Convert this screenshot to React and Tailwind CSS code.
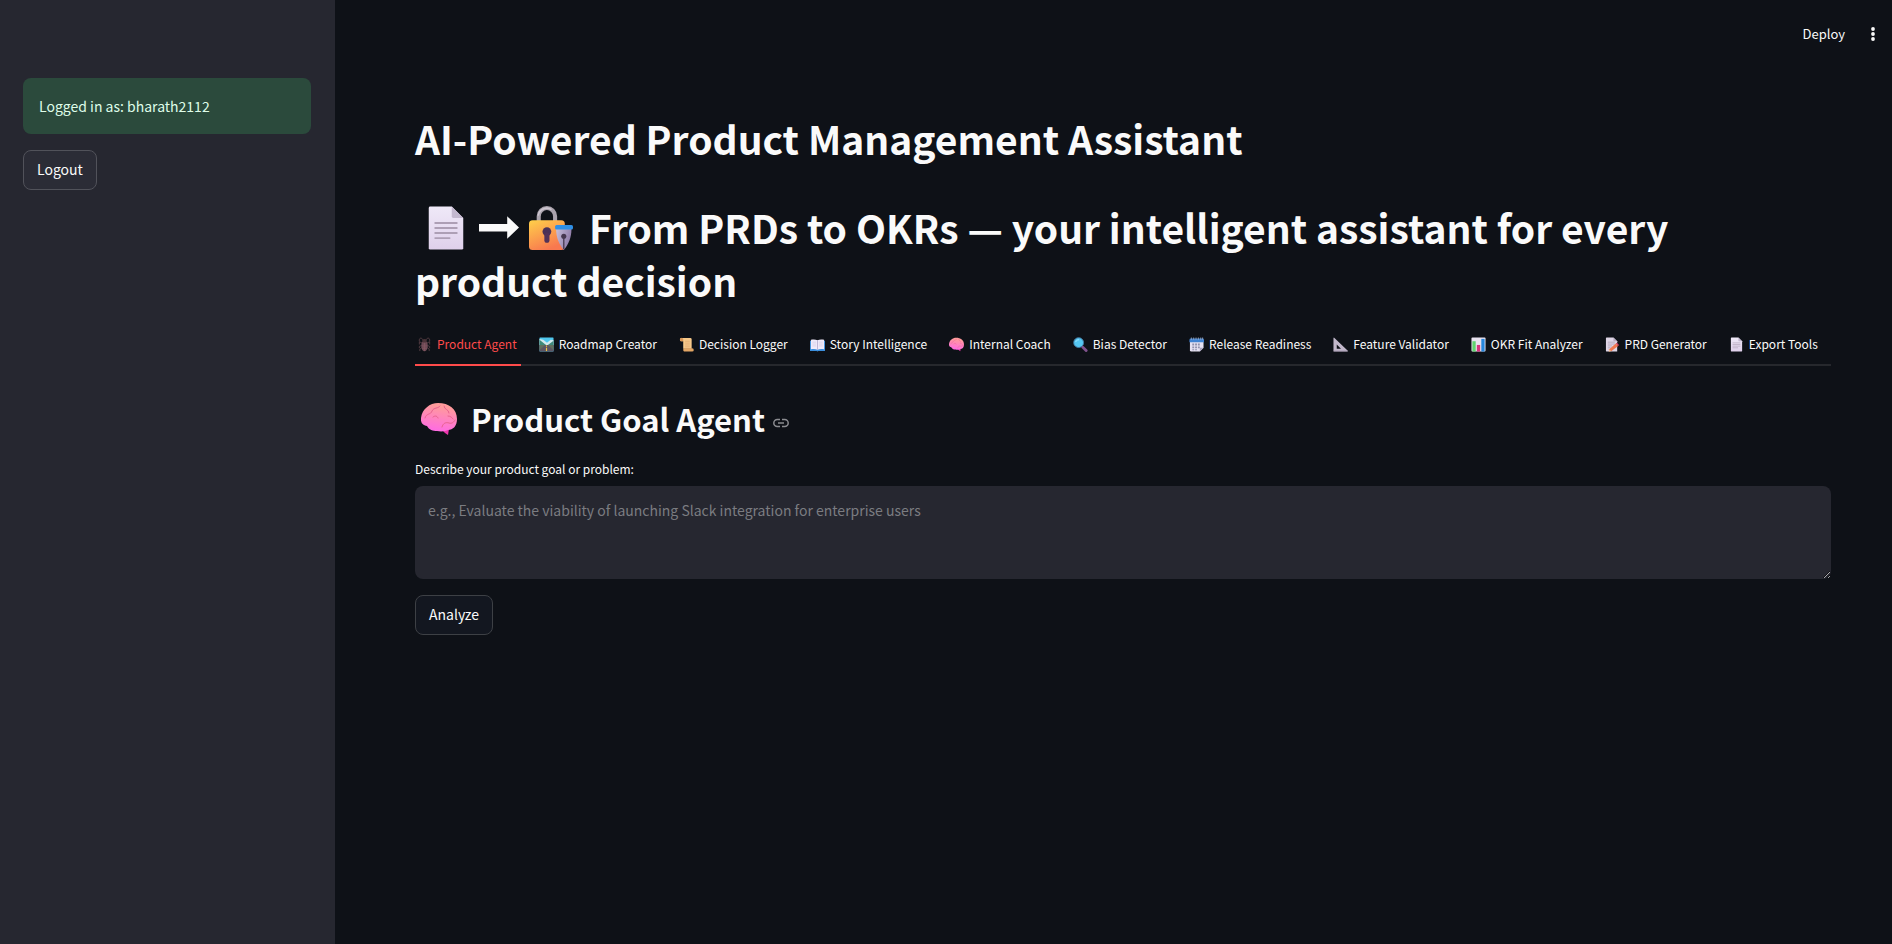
import React from "react";

function Svg({ className = "size-[15px]", children }) {
  return (
    <svg viewBox="0 0 32 32" className={`${className} shrink-0`} aria-hidden="true">
      {children}
    </svg>
  );
}

function Grad({ id, from, to, x2 = 0, y2 = 1 }) {
  return (
    <linearGradient id={id} x1="0" y1="0" x2={x2} y2={y2}>
      <stop offset="0" stopColor={from} />
      <stop offset="1" stopColor={to} />
    </linearGradient>
  );
}

function PageIcon({ className }) {
  return (
    <Svg className={className}>
      <defs><Grad id="page" from="#efe9f8" to="#dfd0eb" /></defs>
      <path d="M5 1h15l8 8v21a1 1 0 0 1-1 1H5a1 1 0 0 1-1-1V2a1 1 0 0 1 1-1z" fill="url(#page)" />
      <path d="M20 1l8 8h-7a1 1 0 0 1-1-1z" fill="#c3b8cf" />
      <path d="M8.500 12.500h15M8.500 16h15M8.500 19.500h15M8.500 23h10" stroke="#ad9fb5" strokeWidth="1.300" strokeLinecap="round" />
    </Svg>
  );
}

function ArrowIcon({ className }) {
  return (
    <svg viewBox="0 0 39 23" className={`${className} shrink-0`} aria-hidden="true">
      <path d="M0 7.500h27.500V0L39 11 27.500 22v-7H0z" fill="#fafafa" />
    </svg>
  );
}

function LockPenIcon({ className }) {
  return (
    <svg viewBox="0 0 43 43" className={`${className} shrink-0`} aria-hidden="true">
      <defs>
        <Grad id="lock" from="#ffd04a" to="#f8784f" x2={0.5} />
        <Grad id="nib" from="#c8bfd9" to="#8e7ba8" x2={1} y2={0.4} />
      </defs>
      <path d="M9.500 17V10a8 8 0 0 1 16 0v7" fill="none" stroke="#aaa3ad" strokeWidth="4" />
      <path d="M9 9.500a8.500 8.500 0 0 1 13-6" fill="none" stroke="#ccc5cf" strokeWidth="1.500" />
      <rect x="0" y="14" width="35" height="29" rx="3.500" fill="url(#lock)" />
      <circle cx="17.500" cy="25" r="4.300" fill="#4b3157" />
      <rect x="15" y="26" width="5" height="10" rx="2.500" fill="#533258" />
      <path d="M26.500 22.500h15c0 8-2.500 14.500-7.500 20.500-5-6-7.500-12.500-7.500-20.500z" fill="url(#nib)" />
      <rect x="25.500" y="18.500" width="17.500" height="4.500" rx="1.500" fill="#2f8fe5" />
      <circle cx="34" cy="29.500" r="2.500" fill="#46384f" />
      <path d="M34 30v12" stroke="#46384f" strokeWidth="1.300" />
    </svg>
  );
}

function BrainIcon({ className }) {
  return (
    <svg viewBox="0 0 36 32" className={`${className} shrink-0`} aria-hidden="true">
      <defs><Grad id="brain" from="#ff9b9b" to="#ff64ee" x2={-0.2} /></defs>
      <path d="M21 24l7 2-1 6c-2-1-4-3-6-5z" fill="#ed36ad" />
      <path d="M17 0C9 0 1 6 0 15c-.6 6 3 7 6 8 2 4 6 5 10 5 5 1 9 0 11-1 5 0 9-4 9-11C36 6 28 0 17 0z" fill="url(#brain)" />
      <path d="M4 15c1-5 6-3 7-7 2-4 6-2 8-5M17 15c-1-3-4-2-5-1M21 24c1-4 4-5 7-4 3 1 5-1 6-3M27 13c3 0 4 2 5 3M23 3c0 4 5 3 5 7" fill="none" stroke="#e8638f" strokeWidth="1" strokeLinecap="round" />
    </svg>
  );
}

function BugIcon() {
  return (
    <Svg>
      <g fill="none" stroke="#5c4248" strokeWidth="1.800">
        <path d="M13 6C9 0 4 2 5 9M19 6c4-6 9-4 8 3M11 13L5 10v6M21 13l6-3v6M10 18l-5 2v4M22 18l5 2v4M10 23l-4 3v4M22 23l4 3v4" />
      </g>
      <ellipse cx="16" cy="19" rx="7" ry="11.500" fill="#6d4a55" />
      <ellipse cx="16" cy="8" rx="5" ry="4" fill="#493338" />
      <path d="M16 12v18M11 19h10M11 24h10" stroke="#8a5b66" strokeWidth="1.300" />
    </Svg>
  );
}

function RoadIcon() {
  return (
    <Svg>
      <rect x="1" y="1" width="30" height="30" rx="1" fill="#4fc7ee" />
      <path d="M1 4l8 2 8 6 8-6 6 1v10H1z" fill="#d3e9ee" />
      <path d="M1 6l14 11H1zM31 8L19 17h12z" fill="#3f8a7b" />
      <path d="M1 17h30v14H1z" fill="#5c5563" />
      <path d="M1 17h12L1 28zM31 17H19l12 11z" fill="#62705d" />
      <path d="M16 18v3M16 23v7" stroke="#f4c542" strokeWidth="2.400" />
    </Svg>
  );
}

function ScrollIcon() {
  return (
    <Svg>
      <path d="M5 2h19a3 3 0 0 1 3 3v20H9V9H4a3 3 0 0 1-2-3c0-3 1-4 3-4z" fill="#f7c98a" />
      <path d="M5 2a3 3 0 0 1 4 3v4H4C1 8 1 3 5 2z" fill="#d99555" />
      <path d="M12 24h16a3 3 0 0 1 0 7H12c-4 0-4-7 0-7z" fill="#e3a665" />
      <path d="M13 9h10M13 13h10M13 17h10M13 21h10" stroke="#dba069" strokeWidth="1.300" />
    </Svg>
  );
}

function BookIcon() {
  return (
    <Svg>
      <path d="M0 8h32v22H18l-2 1-2-1H0z" fill="#3b8edc" />
      <path d="M2 6c5-1 10-1 14 1 4-2 9-2 14-1v20c-5-1-10-1-14 1-4-2-9-2-14-1z" fill="#efeafa" />
      <path d="M16 7v20" stroke="#aaa0c6" strokeWidth="1.500" />
      <path d="M5 11h8M5 15h8M5 19h8M19 11h8M19 15h8M19 19h8" stroke="#c9c0dd" strokeWidth="1.100" />
    </Svg>
  );
}

function LensIcon() {
  return (
    <Svg>
      <path d="M19 20l9 9" stroke="#80528d" strokeWidth="6" strokeLinecap="round" />
      <circle cx="12" cy="12" r="10.500" fill="#55c7f2" stroke="#427ba4" strokeWidth="2" />
      <path d="M6 10c1-3 3-4 6-4" fill="none" stroke="#a4e7ff" strokeWidth="2" strokeLinecap="round" />
    </Svg>
  );
}

function CalendarIcon() {
  return (
    <Svg>
      <path d="M2 7h29v16l-8 8H5a3 3 0 0 1-3-3z" fill="#e5e1f2" />
      <path d="M23 31v-8h8z" fill="#a9a3bd" />
      <path d="M1 11V6a3 3 0 0 1 3-3h25a3 3 0 0 1 3 3v5z" fill="#3f83d3" />
      <path d="M5 1v5M10 1v5M15 1v5M20 1v5M25 1v5M29 1v5" stroke="#a7b2c9" strokeWidth="1.600" />
      <g fill="#8f91ae">
        <path d="M7 14h4v4H7zM13 14h4v4h-4zM19 14h4v4h-4zM7 20h4v4H7zM13 20h4v4h-4zM19 20h4v4h-4zM7 26h4v2H7zM13 26h4v2h-4z" />
      </g>
    </Svg>
  );
}

function RulerIcon() {
  return (
    <Svg>
      <path d="M2 1l29 28a1 1 0 0 1-1 2H2a1 1 0 0 1-1-1V2zM8 16v9h9z" fill="#c2b8cb" fillRule="evenodd" />
      <path d="M1 30h30" stroke="#978ba1" strokeWidth="1.500" />
    </Svg>
  );
}

function ChartIcon() {
  return (
    <Svg>
      <rect x="1" y="1" width="30" height="30" rx="2" fill="#e8e2ef" />
      <rect x="3" y="9" width="7" height="22" fill="#5fd36e" />
      <rect x="12.500" y="17" width="7" height="14" fill="#d7357c" />
      <rect x="22" y="4" width="7" height="27" fill="#2687dc" />
    </Svg>
  );
}

function MemoIcon() {
  return (
    <Svg>
      <path d="M3 1h15l8 8v22H3a1 1 0 0 1-1-1V2z" fill="#ded5e6" />
      <path d="M18 1l8 8h-8z" fill="#b9acc4" />
      <path d="M6 11h15M6 15h15M6 19h9M6 23h6" stroke="#a99cb1" strokeWidth="1.500" />
      <path d="M9 26L23 14l5 5-14 11-6 1z" fill="#ef7850" />
      <path d="M23 14l2-2 5 5-2 2z" fill="#da4265" />
      <path d="M8 31l1-5 4 4z" fill="#edc49a" />
    </Svg>
  );
}

function LinkIcon() {
  return (
    <svg viewBox="0 0 16 16" className="size-4" aria-hidden="true">
      <path d="M7 4.500H4.300a3.500 3.500 0 0 0 0 7H7M9 4.500h2.700a3.500 3.500 0 0 1 0 7H9M5 8h6" fill="none" stroke="#8b8c90" strokeWidth="1.500" />
    </svg>
  );
}

const tabs = [
  ["Product Agent", <BugIcon />],
  ["Roadmap Creator", <RoadIcon />],
  ["Decision Logger", <ScrollIcon />],
  ["Story Intelligence", <BookIcon />],
  ["Internal Coach", <BrainIcon className="size-[15px]" />],
  ["Bias Detector", <LensIcon />],
  ["Release Readiness", <CalendarIcon />],
  ["Feature Validator", <RulerIcon />],
  ["OKR Fit Analyzer", <ChartIcon />],
  ["PRD Generator", <MemoIcon />],
  ["Export Tools", <PageIcon className="size-[15px]" />],
];

export default function App() {
  return (
    <div className="flex min-h-screen bg-[#0e1117] font-['Noto_Sans_CJK_SC',sans-serif] text-[14px] text-[#fafafa] scheme-dark">
      <aside className="w-[335px] shrink-0 bg-[#262730] pt-[78px] pr-6 pl-[23px]">
        <div role="status" className="flex h-14 items-center rounded-lg bg-[#2b4a3c] px-4 text-[#dffde9]">
          Logged in as: bharath2112
        </div>
        <button type="button" className="mt-4 h-10 rounded-lg border border-[#51525a] bg-[#2b2c36] px-[13px] pb-0.5">
          Logout
        </button>
      </aside>

      <div className="min-w-0 flex-1">
        <header className="flex h-[68px] items-center justify-end gap-5 pr-[11px] text-[13px]">
          <button type="button">Deploy</button>
          <button type="button" aria-label="Main menu" className="flex size-4 items-center justify-center">
            <svg viewBox="0 0 16 16" className="size-4" fill="#fafafa" aria-hidden="true">
              <circle cx="8" cy="3" r="1.900" />
              <circle cx="8" cy="8" r="1.900" />
              <circle cx="8" cy="13" r="1.900" />
            </svg>
          </button>
        </header>

        <main className="pt-11 pr-[61px] pl-20">
          <h1 className="text-[39px] leading-[53px] font-bold">AI-Powered Product Management Assistant</h1>
          <h1 className="mt-9 pr-6 text-[39px] leading-[53px] font-bold">
            <span className="mr-4 ml-2 inline-flex items-center gap-[10px] align-[-7px] leading-none">
              <PageIcon className="size-[46px]" />
              <ArrowIcon className="h-6 w-10" />
              <LockPenIcon className="size-11" />
            </span>
            From PRDs to OKRs — your intelligent assistant for every product decision
          </h1>

          <div role="tablist" className="mt-[19px] flex h-10 gap-4 border-b-2 border-[#26282d] text-[12px]">
            {tabs.map(([label, icon], i) => (
              <button
                key={label}
                type="button"
                role="tab"
                aria-selected={i === 0}
                className={`-mb-0.5 flex items-center gap-[5px] border-b-2 pr-1 pb-0.5 pl-0.5 whitespace-nowrap ${
                  i === 0 ? "border-[#ff4b4b] text-[#ff4b4b]" : "border-transparent"
                }`}
              >
                {icon}
                {label}
              </button>
            ))}
          </div>

          <h2 className="mt-[31px] flex h-11 items-center text-[31px] leading-[44px] font-bold">
            <BrainIcon className="mr-[14px] ml-1.5 h-8 w-9" />
            Product Goal Agent
            <a href="#product-goal-agent" aria-label="Link to heading" className="mt-2 ml-2">
              <LinkIcon />
            </a>
          </h2>

          <label htmlFor="goal" className="mt-[18px] block text-[12px] leading-5">
            Describe your product goal or problem:
          </label>
          <textarea
            id="goal"
            placeholder="e.g., Evaluate the viability of launching Slack integration for enterprise users"
            className="mt-[7px] block h-[93px] w-full resize-y rounded-lg bg-[#262730] px-[13px] py-3 leading-6 outline-none placeholder:text-[#7b7c81]"
          />
          <button type="button" className="mt-4 h-10 rounded-lg border border-[#3d4045] bg-[#131720] px-[13px] pb-0.5">
            Analyze
          </button>
        </main>
      </div>
    </div>
  );
}
